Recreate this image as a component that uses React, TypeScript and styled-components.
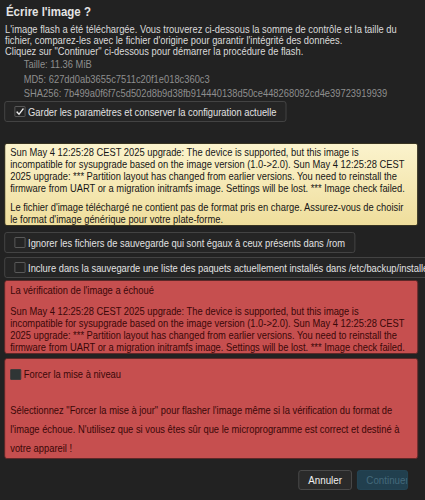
import styled, { createGlobalStyle } from "styled-components";

// the reference glyphs are narrow: the whole dialog is drawn with Liberation Sans
// and squeezed horizontally, so the x values below are reference px / 0.85
const SQUEEZE = 0.85;

const GlobalStyle = createGlobalStyle`
  html, body {
    margin: 0;
    background: #222222;
  }
  body {
    font-family: "Liberation Sans", Arial, sans-serif;
    font-size: 11px;
    color: #dcdcdc;
    overflow: hidden;
  }
`;

const upgradeLog = [
  "Sun May 4 12:25:28 CEST 2025 upgrade: The device is supported, but this image is",
  "incompatible for sysupgrade based on the image version (1.0->2.0). Sun May 4 12:25:28 CEST",
  "2025 upgrade: *** Partition layout has changed from earlier versions. You need to reinstall the",
  "firmware from UART or a migration initramfs image. Settings will be lost. *** Image check failed.",
];

const Lines = ({ lines }: { lines: string[] }) => (
  <>
    {lines.map((l, i) => (
      <span key={i}>
        {l}
        {i < lines.length - 1 && <br />}
      </span>
    ))}
  </>
);

const Check = ({ checked, dark }: { checked?: boolean; dark?: boolean }) => (
  <CheckBox $dark={dark}>
    {checked && (
      <svg width="11" height="9" viewBox="0 0 11 9">
        <path d="M1.6 4.6 L4.4 7.2 L9.6 1.6" fill="none" stroke="#ececec" strokeWidth="1.5" />
      </svg>
    )}
  </CheckBox>
);

export default function App() {
  return (
    <>
      <GlobalStyle />
      <Dialog>
        <Title>Écrire l'image ?</Title>
        <Intro>
          L'image flash a été téléchargée. Vous trouverez ci-dessous la somme de contrôle et la taille du
          <br />
          fichier, comparez-les avec le fichier d'origine pour garantir l'intégrité des données.
          <br />
          Cliquez sur "Continuer" ci-dessous pour démarrer la procédure de flash.
        </Intro>
        <InfoList>
          <li>Taille: 11.36 MiB</li>
          <li>MD5: 627dd0ab3655c7511c20f1e018c360c3</li>
          <li>SHA256: 7b499a0f6f7c5d502d8b9d38fb914440138d50ce448268092cd4e39723919939</li>
        </InfoList>

        <OptionRow $gap={0.5}>
          <Check checked />
          Garder les paramètres et conserver la configuration actuelle
        </OptionRow>

        <Alert $tone="warning" $gap={21}>
          <Lines lines={upgradeLog} />
          <Spacer $h={7} />
          Le fichier d'image téléchargé ne contient pas de format pris en charge. Assurez-vous de choisir
          <br />
          le format d'image générique pour votre plate-forme.
        </Alert>

        <OptionRow $gap={6}>
          <Check />
          Ignorer les fichiers de sauvegarde qui sont égaux à ceux présents dans /rom
        </OptionRow>
        <OptionRow $gap={4}>
          <Check />
          Inclure dans la sauvegarde une liste des paquets actuellement installés dans /etc/backup/installed_packages.txt
        </OptionRow>

        <Alert $tone="danger" $gap={2}>
          La vérification de l'image a échoué
          <Spacer $h={9} />
          <Lines lines={upgradeLog} />
        </Alert>

        <Alert $tone="danger" $gap={4} $padTop={8}>
          <ForceLabel>
            <Check dark />
            Forcer la mise à niveau
          </ForceLabel>
          <ForceNote>
            Sélectionnez "Forcer la mise à jour" pour flasher l'image même si la vérification du format de
            <br />
            l'image échoue. N'utilisez que si vous êtes sûr que le microprogramme est correct et destiné à
            <br />
            votre appareil !
          </ForceNote>
        </Alert>

        <Actions>
          <Button>Annuler</Button>
          <Button $primary disabled>
            Continuer
          </Button>
        </Actions>
      </Dialog>
    </>
  );
}

const Dialog = styled.div`
  width: 487px;
  padding: 0 0 0 5px;
  transform: scaleX(${SQUEEZE});
  transform-origin: 0 0;
`;

const Title = styled.h4`
  margin: 0;
  padding: 3px 0 0 2px;
  font-size: 13.5px;
  font-weight: 700;
  line-height: 18px;
  color: #e4e4e4;
`;

const Intro = styled.p`
  margin: 3px 0 0 1px;
  font-size: 11px;
  line-height: 11px;
  white-space: nowrap;
  color: #dadada;
`;

const InfoList = styled.ul`
  list-style: none;
  margin: 0;
  padding: 0 0 0 23px;
  line-height: 14.5px;
  color: #8e8e8e;
  white-space: nowrap;
`;

const CheckBox = styled.span<{ $dark?: boolean }>`
  display: inline-flex;
  align-items: center;
  justify-content: center;
  width: 13px;
  height: 11px;
  margin-right: 3px;
  box-sizing: border-box;
  border: 1px solid ${(p) => (p.$dark ? "#3b3b3b" : "#5e5e5e")};
  background: ${(p) => (p.$dark ? "#2f3535" : "#242424")};
  border-radius: 1px;
  flex-shrink: 0;
`;

const OptionRow = styled.label<{ $gap: number }>`
  display: flex;
  width: max-content;
  align-items: center;
  height: 21px;
  margin-top: ${(p) => p.$gap}px;
  padding: 0 11px;
  box-sizing: border-box;
  border: 1px solid #464646;
  border-radius: 3px;
  background: #252525;
  color: #e2e2e2;
  white-space: nowrap;
  font-size: 11px;
`;

const Alert = styled.div<{ $tone: "warning" | "danger"; $gap: number; $padTop?: number }>`
  margin-top: ${(p) => p.$gap}px;
  padding: ${(p) => p.$padTop ?? (p.$tone === "warning" ? 2 : 3)}px 6px 0 6px;
  border: 1px solid ${(p) => (p.$tone === "warning" ? "#3a3522" : "#5c2727")};
  border-radius: 3px;
  line-height: 12px;
  white-space: nowrap;
  color: ${(p) => (p.$tone === "warning" ? "#161616" : "#3a0808")};
  background: ${(p) =>
    p.$tone === "warning"
      ? "linear-gradient(to bottom, #fbf3cd 0%, #efde9c 100%)"
      : "#c64f4f"};
`;

const Spacer = styled.div<{ $h: number }>`
  height: ${(p) => p.$h}px;
`;

const ForceLabel = styled.label`
  display: flex;
  align-items: center;
  height: 14px;
`;

const ForceNote = styled.p`
  margin: 20px 0 0;
  line-height: 19px;
`;

const Actions = styled.div`
  display: flex;
  justify-content: flex-end;
  gap: 6px;
  margin-top: 11px;
  padding-right: 12px;
`;

const Button = styled.button<{ $primary?: boolean }>`
  height: 20px;
  width: ${(p) => (p.$primary ? "60px" : "63px")};
  padding: ${(p) => (p.$primary ? "0 0 0 10px" : "0")};
  overflow: hidden;
  white-space: nowrap;
  text-align: ${(p) => (p.$primary ? "left" : "center")};
  font-family: inherit;
  font-size: 11.5px;
  border-radius: 3px;
  border: 1px solid ${(p) => (p.$primary ? "#244556" : "#4c4c4c")};
  background: ${(p) => (p.$primary ? "#213f4e" : "#2a2a2a")};
  color: ${(p) => (p.$primary ? "#44697b" : "#f0f0f0")};
  cursor: pointer;
`;
